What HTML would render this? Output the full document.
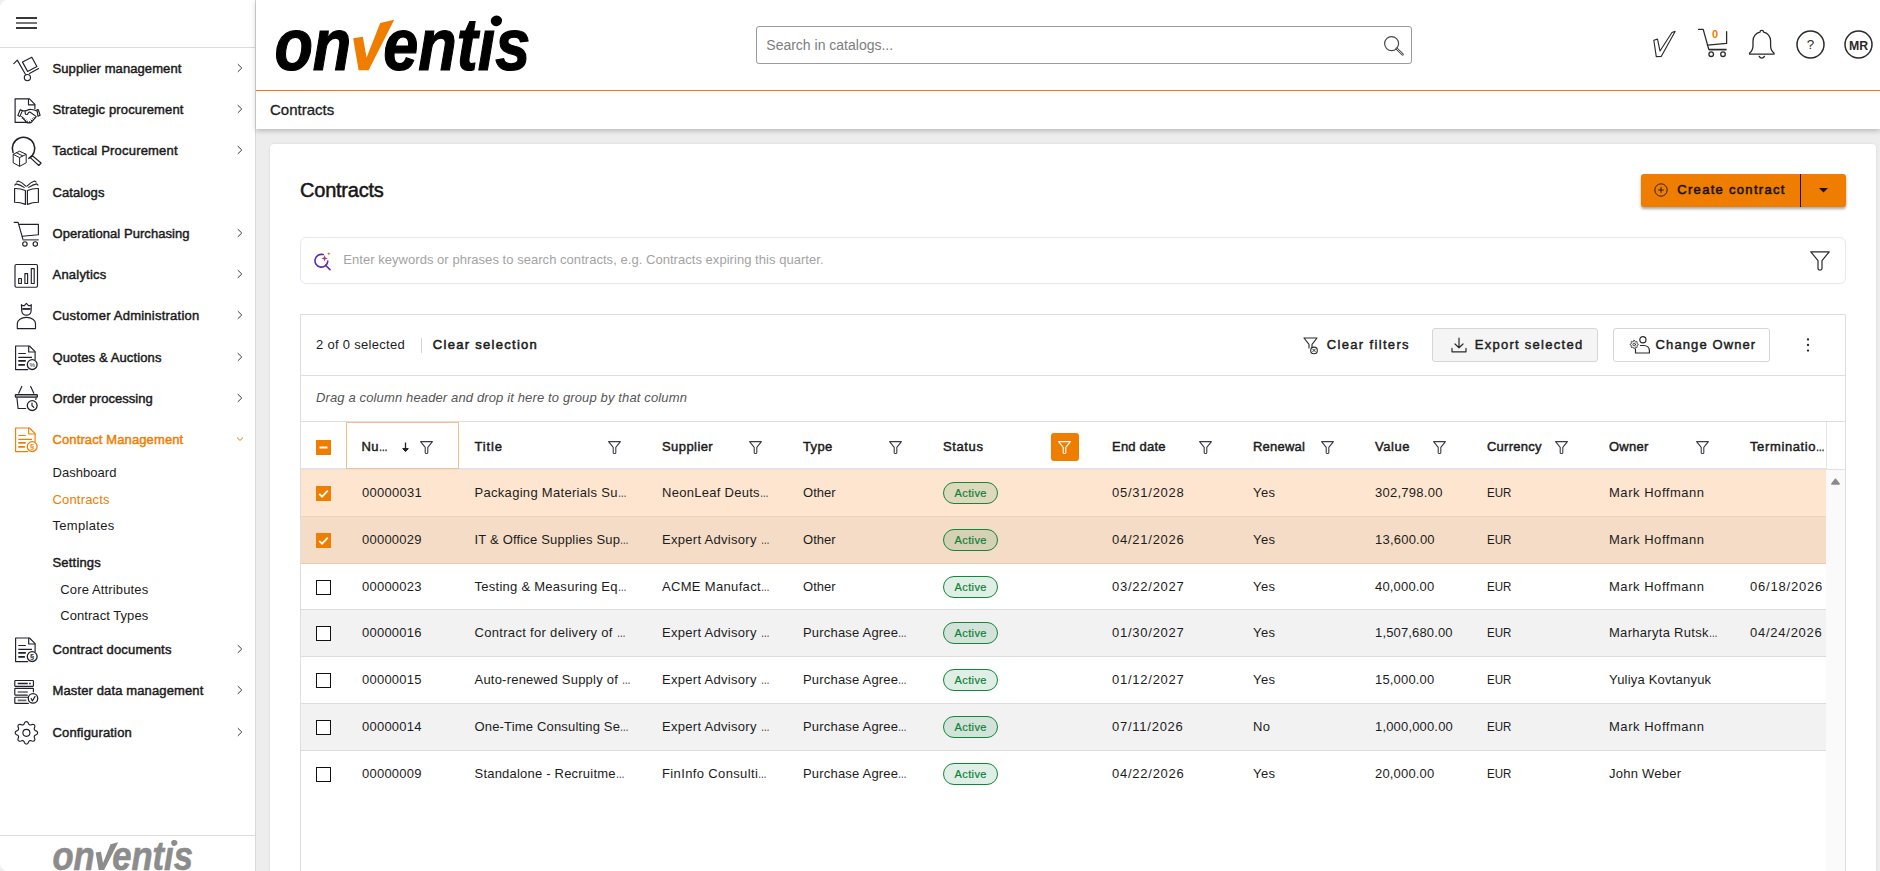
<!DOCTYPE html>
<html>
<head>
<meta charset="utf-8">
<title>Contracts</title>
<style>
*{box-sizing:border-box;margin:0;padding:0}
html,body{width:1880px;height:871px;overflow:hidden}
body{font-family:"Liberation Sans",sans-serif;font-size:13px;color:#1c1c1c;background:#ededed;position:relative}
.abs{position:absolute}
svg{display:block;overflow:visible}
.el{display:inline-block;width:8.6px;transform:scaleX(.66);transform-origin:0 50%;letter-spacing:0}
/* ---------- sidebar ---------- */
#side{position:absolute;left:0;top:0;width:256px;height:871px;background:#fff;border-right:1px solid #d9d9d9;border-radius:8px 0 0 8px}
#side .top{position:absolute;left:0;top:0;width:255px;height:48px;border-bottom:1px solid #dcdcdc}
.mi{position:absolute;left:0;width:255px;height:40px;line-height:40px}
.mi .lbl{position:absolute;left:52.5px;top:1px;white-space:nowrap;font-size:13px;color:#1b1b1b;-webkit-text-stroke:0.45px #1b1b1b;letter-spacing:0px}
.mi .ic{position:absolute;left:12px;top:6px;width:28px;height:28px}
.mi .chev{position:absolute;left:236px;top:15px;width:8px;height:10px}
.mi.act .lbl{color:#ef7d00;-webkit-text-stroke:0.45px #ef7d00}
.si{position:absolute;left:52.5px;height:20px;line-height:20px;font-size:13px;color:#1b1b1b;white-space:nowrap;letter-spacing:0.1px}
.si.b{-webkit-text-stroke:0.45px #1b1b1b}
.si.o{color:#ef7d00}
#side .foot{position:absolute;left:0;top:835px;width:255px;height:36px;border-top:1px solid #dcdcdc;overflow:hidden}
/* ---------- header ---------- */
#hdr{position:absolute;left:256px;top:0;width:1624px;height:129px;background:#fff;box-shadow:0 2px 5px rgba(0,0,0,.22)}
#hdr .line{position:absolute;left:0;top:90px;width:1624px;height:1px;background:#ef7d00}
#hdr .crumb{position:absolute;left:14px;top:100px;height:20px;line-height:20px;font-size:15px;color:#1c1c1c;-webkit-text-stroke:0.3px #1c1c1c}
#srch{position:absolute;left:500px;top:26px;width:656px;height:38px;border:1px solid #9b9b9b;border-radius:3px;background:#fff}
#srch span{position:absolute;left:9.300px;top:8px;line-height:20px;font-size:14px;color:#7d7d7d}
/* ---------- card ---------- */
#card{position:absolute;left:270px;top:144px;width:1606px;height:740px;background:#fff;border-radius:4px;box-shadow:0 0 3px rgba(0,0,0,.10)}
#card h1{position:absolute;left:30px;top:33px;line-height:26px;font-size:20px;font-weight:normal;color:#161616;-webkit-text-stroke:0.5px #161616;white-space:nowrap;letter-spacing:-0.22px}
#create{position:absolute;left:1371px;top:30px;width:205px;height:33px;background:#ef7d00;border-radius:3px;box-shadow:0 2px 3px rgba(0,0,0,.35)}
#create .t{position:absolute;left:36.300px;top:6px;line-height:20px;font-size:13px;color:#1a1208;-webkit-text-stroke:0.55px #1a1208;letter-spacing:1.3px;white-space:nowrap}
#create .dv{position:absolute;left:159px;top:0;width:1px;height:33px;background:#1a1208}
#ais{position:absolute;left:30px;top:93px;width:1546px;height:47px;border:1px solid #e6e6f4;border-radius:6px;background:#fff}
#ais .ph{position:absolute;left:42.300px;top:12px;line-height:20px;font-size:13px;color:#a3a3a3;white-space:nowrap;letter-spacing:0.04px}
/* ---------- grid ---------- */
#grid{position:absolute;left:30px;top:170px;width:1546px;height:600px;border:1px solid #dedede;border-bottom:none;background:#fff}
#tb{position:absolute;left:0;top:0;width:1544px;height:61px;border-bottom:1px solid #dedede}
#tb .sel{position:absolute;left:15px;top:20px;line-height:20px;white-space:nowrap;letter-spacing:0.3px;color:#1c1c1c}
#tb .sep{position:absolute;left:119.5px;top:23px;width:1px;height:15px;background:#d4d4d4}
.bt{position:absolute;line-height:20px;white-space:nowrap;font-size:13px;color:#1c1c1c;-webkit-text-stroke:0.45px #1c1c1c;letter-spacing:1.1px}
.bt.bold{font-weight:bold;-webkit-text-stroke:0}
.btn{position:absolute;top:13px;height:34px;border:1px solid #d6d6d6;border-radius:3px}
#gp{position:absolute;left:0;top:61px;width:1544px;height:46px;border-bottom:1px solid #dedede}
#gp span{position:absolute;left:15px;top:12px;line-height:20px;font-style:italic;color:#555;white-space:nowrap;letter-spacing:0.135px}
#gh{position:absolute;left:0;top:107px;width:1544px;height:48px;border-bottom:2px solid #e3e3e3;background:#fff}
.hc{position:absolute;top:0;height:45px}
.hc .t{position:absolute;left:15.5px;top:15px;line-height:20px;font-size:13px;color:#1b1b1b;-webkit-text-stroke:0.45px #1b1b1b;white-space:nowrap;letter-spacing:0.3px}
.hc .f{position:absolute;top:19px;width:13px;height:13px}
.row{position:absolute;left:0;width:1525px;height:46.83px;border-bottom:1px solid #dcdcdc;background:#fff}
.row.last{border-bottom:none}
.row.alt{background:#f2f2f2}
.row.s1{background:#fde5d0;border-bottom-color:#ecd3be}
.row.s2{background:#f4dcc6;border-bottom-color:#e6cdb8}
.c{position:absolute;top:13px;line-height:20px;white-space:nowrap;letter-spacing:0.3px;color:#1c1c1c}
.cb{position:absolute;left:15px;top:16px;width:15px;height:15px;border:1px solid #111;border-radius:0;background:#fff}
.cb.on{border:none;background:#ef7d00}
.bdg{position:absolute;left:642px;top:12px;width:55px;height:22px;border:1px solid #11873a;border-radius:11px;background:rgba(17,135,58,.13);color:#0d8236;-webkit-text-stroke:0.2px #0d8236;font-size:11px;line-height:20px;text-align:center;letter-spacing:0.38px;text-indent:0.4px}
</style>
</head>
<body>
<div class="abs" style="left:0;top:0;width:12px;height:871px;background:#efefef"></div>
<div id="side">
<div class="top"><div class="abs" style="left:16px;top:17px;width:21px;height:2px;background:#383838"></div><div class="abs" style="left:16px;top:22px;width:21px;height:2px;background:#757575"></div><div class="abs" style="left:16px;top:27px;width:21px;height:2px;background:#383838"></div></div>
<div class="mi" style="top:48px"><svg class="ic" viewBox="0 0 28 28"><path d="M1.8 9.6l3.5-3.5 8.100 14.200" stroke="#20202a" stroke-width="1.15" fill="none" stroke-linejoin="round" stroke-linecap="round" /><circle cx="15.400" cy="23.600" r="3.100" stroke="#20202a" stroke-width="1.15" fill="none" stroke-linejoin="round" stroke-linecap="round"/><path d="M17.500 19.500l9.100-5" stroke="#20202a" stroke-width="1.15" fill="none" stroke-linejoin="round" stroke-linecap="round" /><path d="M10.500 8.100l9.300-4.900 5.100 9.300-9.300 4.900z" stroke="#20202a" stroke-width="1.15" fill="none" stroke-linejoin="round" stroke-linecap="round" /></svg><div class="lbl" style="letter-spacing:0.094px">Supplier management</div><svg class="chev" viewBox="0 0 8 10"><path d="M1.800 1.200l4 3.800-4 3.800" stroke="#3a3a52" stroke-width="1" fill="none"/></svg></div>
<div class="mi" style="top:89px"><svg class="ic" viewBox="0 0 28 28"><g transform="translate(0 .8)"><path d="M22.900 13V8.600l-5.400-5.600H3.100v23.600h11.500" stroke="#20202a" stroke-width="1.15" fill="none" stroke-linejoin="round" stroke-linecap="round" /><path d="M16.500 3.400v5.600h6.200" stroke="#20202a" stroke-width="1.15" fill="none" stroke-linejoin="round" stroke-linecap="round" /><path d="M6 13.800l2.300-.3 2.600 1.200 4-1.600 4 .200 4.200 1.800 2.400-.6 1.500 5.500-3 .8-5.400 5.200-3.300 .600-7-6-2 .3z" fill="#fff" stroke="none"/><path d="M8.200 13.900l2.100.9-2.300 5.800-2.100-1z" stroke="#20202a" stroke-width="1.15" fill="none" stroke-linejoin="round" stroke-linecap="round" /><path d="M24.900 14.100l1.300-.400 1.900 5.800-2.100 1z" stroke="#20202a" stroke-width="1.15" fill="none" stroke-linejoin="round" stroke-linecap="round" /><path d="M10.300 14.800c2.500.6 4.500.2 5.500-.600s5.500-.9 9.100.9" stroke="#20202a" stroke-width="1.15" fill="none" stroke-linejoin="round" stroke-linecap="round" /><path d="M13.100 15.800l.3 2.700 2 .2 1.300-2.300 1.200-.2 6.200 4.400" stroke="#20202a" stroke-width="1.15" fill="none" stroke-linejoin="round" stroke-linecap="round" /><path d="M9.600 20.700l5 5.900c1.400.6 3.200.6 4.700 0l4.700-5.500" stroke="#20202a" stroke-width="1.15" fill="none" stroke-linejoin="round" stroke-linecap="round" stroke-width="1.200"/><path d="M11.200 21.500l-1 1.400M12.700 22.700l-1.100 1.500M14.200 23.900l-1.100 1.500M15.700 25l-1 1.400M17.300 25.200l1.100 1.300M18.800 23.900l1.200 1.400M20.300 22.600l1.200 1.400M21.700 21.300l1.200 1.400" stroke="#20202a" stroke-width="1" fill="none"/></g></svg><div class="lbl" style="letter-spacing:0.15px">Strategic procurement</div><svg class="chev" viewBox="0 0 8 10"><path d="M1.800 1.200l4 3.800-4 3.800" stroke="#3a3a52" stroke-width="1" fill="none"/></svg></div>
<div class="mi" style="top:130px"><svg class="ic" viewBox="0 0 28 28"><path d="M1.040 16.500A11.200 11.200 0 1 1 16.760 22.390" stroke="#20202a" stroke-width="1.500" fill="none" stroke-linecap="round"/><path d="M18.300 21.600l2.100-1.800 8.700 7.200-2.300 2.500z" stroke="#20202a" stroke-width="1.15" fill="none" stroke-linejoin="round" stroke-linecap="round" stroke-width="1.400"/><path d="M7.600 15.200l6.600 3.100v8.500l-6.600 3.500-6.400-3.500v-8.500z" fill="#fff" stroke="#20202a" stroke-width="1" stroke-linejoin="round"/><path d="M1.200 18.300l6.400 3.300 6.600-3.300M7.600 21.600v8.700M4.300 16.700l6.600 3.300" stroke="#20202a" stroke-width="1" fill="none"/></svg><div class="lbl" style="letter-spacing:0.195px">Tactical Procurement</div><svg class="chev" viewBox="0 0 8 10"><path d="M1.800 1.200l4 3.800-4 3.800" stroke="#3a3a52" stroke-width="1" fill="none"/></svg></div>
<div class="mi" style="top:172px"><svg class="ic" viewBox="0 0 28 28"><path d="M2.600 10.500q5.600-.2 10.800 2v13.900q-5.200-2.200-10.800-2.100z" stroke="#20202a" stroke-width="1.15" fill="none" stroke-linejoin="round" stroke-linecap="round" /><path d="M26.400 10.500q-5.600-.2-11 2v13.900q5.400-2.200 11-2.100z" stroke="#20202a" stroke-width="1.15" fill="none" stroke-linejoin="round" stroke-linecap="round" /><path d="M13.800 8.200Q10 4.200 6.300 3L4.700 3.900M12.100 9.400Q8 6.500 4 5.900L2.800 7.200M15 8.200Q18.800 4.200 22.500 3l1.600.9M16.700 9.400Q20.800 6.500 24.800 5.900L26 7.200" stroke="#20202a" stroke-width="1.15" fill="none" stroke-linejoin="round" stroke-linecap="round" /></svg><div class="lbl" style="letter-spacing:0.084px">Catalogs</div></div>
<div class="mi" style="top:213px"><svg class="ic" viewBox="0 0 28 28"><path d="M2.200 3.400h3.900l5 17.400" stroke="#20202a" stroke-width="1.15" fill="none" stroke-linejoin="round" stroke-linecap="round" /><path d="M7.400 5.400h19v10.400l-16.100 1.500" stroke="#20202a" stroke-width="1.15" fill="none" stroke-linejoin="round" stroke-linecap="round" /><path d="M11.100 20.800h15.700" stroke="#777" stroke-width="1.700" fill="none"/><circle cx="12.900" cy="24.900" r="2.200" stroke="#20202a" stroke-width="1.15" fill="none" stroke-linejoin="round" stroke-linecap="round"/><circle cx="23.300" cy="24.900" r="2.200" stroke="#20202a" stroke-width="1.15" fill="none" stroke-linejoin="round" stroke-linecap="round"/></svg><div class="lbl" style="letter-spacing:0.054px">Operational Purchasing</div><svg class="chev" viewBox="0 0 8 10"><path d="M1.800 1.200l4 3.800-4 3.800" stroke="#3a3a52" stroke-width="1" fill="none"/></svg></div>
<div class="mi" style="top:254px"><svg class="ic" viewBox="0 0 28 28"><rect x="3" y="4.500" width="22.500" height="22.700" rx="1.400" stroke="#20202a" stroke-width="1.15" fill="none" stroke-linejoin="round" stroke-linecap="round"/><rect x="6.700" y="18.500" width="2.700" height="5" stroke="#20202a" stroke-width="1.15" fill="none" stroke-linejoin="round" stroke-linecap="round"/><rect x="12.900" y="13.600" width="2.700" height="9.900" stroke="#20202a" stroke-width="1.15" fill="none" stroke-linejoin="round" stroke-linecap="round"/><rect x="19.300" y="8.600" width="2.900" height="14.900" stroke="#20202a" stroke-width="1.15" fill="none" stroke-linejoin="round" stroke-linecap="round"/></svg><div class="lbl" style="letter-spacing:0.221px">Analytics</div><svg class="chev" viewBox="0 0 8 10"><path d="M1.800 1.200l4 3.800-4 3.800" stroke="#3a3a52" stroke-width="1" fill="none"/></svg></div>
<div class="mi" style="top:295px"><svg class="ic" viewBox="0 0 28 28"><path d="M9.400 3.600l.9 1h2l2.100-2.200 2.100 2.200h2l.8-1-.2 6.600c-.3 2.400-2.200 3.900-4.700 3.900s-4.300-1.500-4.600-3.900z" stroke="#20202a" stroke-width="1.15" fill="none" stroke-linejoin="round" stroke-linecap="round" /><path d="M10.300 7.950h8.200" stroke="#20202a" stroke-width="1.800" fill="none"/><path d="M5.300 27.600v-5c0-3.400 3.900-6.200 9.100-6.200s9.100 2.800 9.100 6.200v5z" stroke="#20202a" stroke-width="1.15" fill="none" stroke-linejoin="round" stroke-linecap="round" /></svg><div class="lbl" style="letter-spacing:0.231px">Customer Administration</div><svg class="chev" viewBox="0 0 8 10"><path d="M1.800 1.200l4 3.800-4 3.800" stroke="#3a3a52" stroke-width="1" fill="none"/></svg></div>
<div class="mi" style="top:337px"><svg class="ic" viewBox="0 0 28 28"><path d="M23.100 16.700V8.600l-5.600-5.600H3.600v23.600h12.200" stroke="#20202a" stroke-width="1.15" fill="none" stroke-linejoin="round" stroke-linecap="round"/><path d="M16.700 3.400v5.600h6.200" stroke="#20202a" stroke-width="1.15" fill="none" stroke-linejoin="round" stroke-linecap="round"/><path d="M6.300 10.500h7.500M6.300 14.400h13.700" stroke="#20202a" stroke-width="1.200" fill="none"/><path d="M6.300 17.900h7.500M6.300 21.800h6.600" stroke="#20202a" stroke-width="1.700" fill="none"/><circle cx="20.200" cy="21.600" r="4.900" fill="#fff" stroke="#20202a" stroke-width="1.300"/><text x="20.200" y="23.800" font-size="6.200" font-weight="normal" text-anchor="middle" fill="#20202a" font-family="Liberation Sans">%</text></svg><div class="lbl" style="letter-spacing:0.122px">Quotes &amp; Auctions</div><svg class="chev" viewBox="0 0 8 10"><path d="M1.800 1.200l4 3.800-4 3.800" stroke="#3a3a52" stroke-width="1" fill="none"/></svg></div>
<div class="mi" style="top:378px"><svg class="ic" viewBox="0 0 28 28"><path d="M6.700 9.200l3.100-6.800M21.800 9.200l-3.100-6.800" stroke="#20202a" stroke-width="1.15" fill="none" stroke-linejoin="round" stroke-linecap="round" /><rect x="3.400" y="10.700" width="21.900" height="2.400" fill="#c4c4c4" stroke="#20202a" stroke-width="1.300" rx=".4"/><path d="M4.900 13.800l1.200 10.700h7.500M24.100 13.800l-.3 1.600" stroke="#20202a" stroke-width="1.15" fill="none" stroke-linejoin="round" stroke-linecap="round" /><circle cx="20.200" cy="21.600" r="4.900" fill="#fff" stroke="#20202a" stroke-width="1.300"/><path d="M20 19.100v2.700l1.800 1.500" stroke="#20202a" stroke-width="1.15" fill="none" stroke-linejoin="round" stroke-linecap="round" /></svg><div class="lbl" style="letter-spacing:0.039px">Order processing</div><svg class="chev" viewBox="0 0 8 10"><path d="M1.800 1.200l4 3.800-4 3.800" stroke="#3a3a52" stroke-width="1" fill="none"/></svg></div>
<div class="mi act" style="top:419px"><svg class="ic" viewBox="0 0 28 28"><path d="M23.100 16.700V8.600l-5.600-5.600H3.600v23.600h12.200" stroke="#ef7d00" stroke-width="1.15" fill="none" stroke-linejoin="round" stroke-linecap="round"/><path d="M16.700 3.400v5.600h6.200" stroke="#ef7d00" stroke-width="1.15" fill="none" stroke-linejoin="round" stroke-linecap="round"/><path d="M6.300 10.500h7.500M6.300 14.400h13.700" stroke="#ef7d00" stroke-width="1.200" fill="none"/><path d="M6.300 17.900h7.500M6.300 21.800h6.600" stroke="#ef7d00" stroke-width="1.700" fill="none"/><circle cx="20.200" cy="21.600" r="4.900" fill="#fff" stroke="#ef7d00" stroke-width="1.300"/><text x="20.200" y="24.300" font-size="7.500" font-weight="bold" text-anchor="middle" fill="#ef7d00" font-family="Liberation Sans">§</text></svg><div class="lbl" style="letter-spacing:0.115px">Contract Management</div><svg class="chev" viewBox="0 0 8 10"><path d="M1 3.600l3 2.800 3-2.800" stroke="#ef7d00" stroke-width="1" fill="none"/></svg></div>
<div class="mi" style="top:629px"><svg class="ic" viewBox="0 0 28 28"><path d="M23.100 16.700V8.600l-5.600-5.600H3.600v23.600h12.200" stroke="#20202a" stroke-width="1.15" fill="none" stroke-linejoin="round" stroke-linecap="round"/><path d="M16.700 3.400v5.600h6.200" stroke="#20202a" stroke-width="1.15" fill="none" stroke-linejoin="round" stroke-linecap="round"/><path d="M6.300 10.500h7.500M6.300 14.400h13.700" stroke="#20202a" stroke-width="1.200" fill="none"/><path d="M6.300 17.900h7.500M6.300 21.800h6.600" stroke="#20202a" stroke-width="1.700" fill="none"/><circle cx="20.200" cy="21.600" r="4.900" fill="#fff" stroke="#20202a" stroke-width="1.300"/><text x="20.200" y="24.300" font-size="7.500" font-weight="bold" text-anchor="middle" fill="#20202a" font-family="Liberation Sans">§</text></svg><div class="lbl" style="letter-spacing:0.15px">Contract documents</div><svg class="chev" viewBox="0 0 8 10"><path d="M1.800 1.200l4 3.800-4 3.800" stroke="#3a3a52" stroke-width="1" fill="none"/></svg></div>
<div class="mi" style="top:670px"><svg class="ic" viewBox="0 0 28 28"><rect x="2.800" y="4.500" width="18.600" height="5.800" rx=".5" stroke="#20202a" stroke-width="1.15" fill="none" stroke-linejoin="round" stroke-linecap="round"/><path d="M15.400 19.100H3.300q-.5 0-.5-.5v-5.800q0-.5.500-.5h17.600q.5 0 .5.500v3" stroke="#20202a" stroke-width="1.15" fill="none" stroke-linejoin="round" stroke-linecap="round" /><path d="M15.800 21.200H3.300q-.5 0-.5.500v5.200q0 .5.500.5h13" stroke="#20202a" stroke-width="1.15" fill="none" stroke-linejoin="round" stroke-linecap="round" /><path d="M5.700 7.500h10.100M17.100 7.500h1.600" stroke="#20202a" stroke-width="1.300" fill="none"/><path d="M5.700 16h10.100M5.700 24.300h8.700" stroke="#666" stroke-width="1.700" fill="none"/><circle cx="21" cy="22.400" r="4.700" fill="#fff" stroke="#20202a" stroke-width="1.300"/><path d="M19.100 22.400l1.300 2.500 2.700-4.500" stroke="#20202a" stroke-width="1.15" fill="none" stroke-linejoin="round" stroke-linecap="round" /></svg><div class="lbl" style="letter-spacing:0.127px">Master data management</div><svg class="chev" viewBox="0 0 8 10"><path d="M1.800 1.200l4 3.800-4 3.800" stroke="#3a3a52" stroke-width="1" fill="none"/></svg></div>
<div class="mi" style="top:712px"><svg class="ic" viewBox="0 0 28 28"><path d="M14.40 3.60L15.12 3.75L15.80 4.19L16.33 5.09L16.76 6.01L17.20 6.54L17.69 6.85L18.26 6.98L18.95 6.92L19.90 6.57L20.91 6.31L21.70 6.47L22.32 6.88L22.73 7.50L22.89 8.29L22.63 9.30L22.28 10.25L22.22 10.94L22.35 11.51L22.66 12.00L23.19 12.44L24.11 12.87L25.01 13.40L25.45 14.08L25.60 14.80L25.45 15.52L25.01 16.20L24.11 16.73L23.19 17.16L22.66 17.60L22.35 18.09L22.22 18.66L22.28 19.35L22.63 20.30L22.89 21.31L22.73 22.10L22.32 22.72L21.70 23.13L20.91 23.29L19.90 23.03L18.95 22.68L18.26 22.62L17.69 22.75L17.20 23.06L16.76 23.59L16.33 24.51L15.80 25.41L15.12 25.85L14.40 26.00L13.68 25.85L13.00 25.41L12.47 24.51L12.04 23.59L11.60 23.06L11.11 22.75L10.54 22.62L9.85 22.68L8.90 23.03L7.89 23.29L7.10 23.13L6.48 22.72L6.07 22.10L5.91 21.31L6.17 20.30L6.52 19.35L6.58 18.66L6.45 18.09L6.14 17.60L5.61 17.16L4.69 16.73L3.79 16.20L3.35 15.52L3.20 14.80L3.35 14.08L3.79 13.40L4.69 12.87L5.61 12.44L6.14 12.00L6.45 11.51L6.58 10.94L6.52 10.25L6.17 9.30L5.91 8.29L6.07 7.50L6.48 6.88L7.10 6.47L7.89 6.31L8.90 6.57L9.85 6.92L10.54 6.98L11.11 6.85L11.60 6.54L12.04 6.01L12.47 5.09L13.00 4.19L13.68 3.75z" stroke="#20202a" stroke-width="1.15" fill="none" stroke-linejoin="round" stroke-linecap="round" /><circle cx="14.400" cy="14.800" r="3.500" stroke="#20202a" stroke-width="1.15" fill="none" stroke-linejoin="round" stroke-linecap="round"/></svg><div class="lbl" style="letter-spacing:0.164px">Configuration</div><svg class="chev" viewBox="0 0 8 10"><path d="M1.800 1.200l4 3.800-4 3.800" stroke="#3a3a52" stroke-width="1" fill="none"/></svg></div>
<div class="si " style="left:52.5px;top:463px;letter-spacing:0.036px">Dashboard</div>
<div class="si o" style="left:52.5px;top:490px;letter-spacing:0.17px">Contracts</div>
<div class="si " style="left:52.5px;top:516px;letter-spacing:0.319px">Templates</div>
<div class="si b" style="left:52.5px;top:553px;letter-spacing:0.188px">Settings</div>
<div class="si " style="left:60.3px;top:580px;letter-spacing:0.136px">Core Attributes</div>
<div class="si " style="left:60.3px;top:606px;letter-spacing:0.054px">Contract Types</div>
<div class="foot"><svg class="abs" style="left:50px;top:1px" width="146.034" height="37.332" viewBox="270 10 266 68"><g font-family="Liberation Sans" font-weight="bold" font-style="italic" font-size="73.500" fill="#8c8c8c" stroke="#8c8c8c" stroke-width="1.2"><text transform="translate(274.400 70.300) scale(0.857 1)">on</text><text transform="translate(383.300 70.300) scale(0.857 1)">entis</text></g><rect x="484" y="12" width="18" height="13.500" fill="#fff"/><ellipse cx="496.400" cy="20.800" rx="5.700" ry="5.300" fill="#8c8c8c" transform="rotate(-15 496.400 20.800)"/><path d="M353.2 38.300L362.800 36.700L366.600 57.500L380.200 23L394.200 19.700L368.600 70.300L358.600 70.300Z" fill="#8c8c8c"/></svg></div>
</div>
<div id="hdr">
<div class="line"></div>
<div class="crumb">Contracts</div>
<div id="srch"><span>Search in catalogs...</span></div>
<svg class="abs" style="left:14px;top:10px" width="266" height="68" viewBox="270 10 266 68"><g font-family="Liberation Sans" font-weight="bold" font-style="italic" font-size="73.500" fill="#000" stroke="#000" stroke-width="1.2"><text transform="translate(274.400 70.300) scale(0.857 1)">on</text><text transform="translate(383.300 70.300) scale(0.857 1)">entis</text></g><rect x="484" y="12" width="18" height="13.500" fill="#fff"/><ellipse cx="496.400" cy="20.800" rx="5.700" ry="5.300" fill="#000" transform="rotate(-15 496.400 20.800)"/><path d="M353.2 38.300L362.800 36.700L366.600 57.500L380.200 23L394.200 19.700L368.600 70.300L358.600 70.300Z" fill="#ef7d00"/></svg>
<svg class="abs" style="left:1126.800px;top:35px" width="22" height="22" viewBox="0 0 22 22"><circle cx="8.600" cy="8.600" r="7" stroke="#484848" stroke-width="1.200" fill="none"/><path d="M13.600 13.600l6 5.800" stroke="#484848" stroke-width="2.400" stroke-linecap="round"/><path d="M14 14l5.500 5.300" stroke="#fff" stroke-width=".8" stroke-linecap="round"/></svg>
<svg class="abs" style="left:1392px;top:26px" width="30" height="34" viewBox="0 0 30 34"><path transform="translate(2.300 2.600) scale(0.880)" d="M4 13.200l4.200-1.200 2.800 13.400L24.600 4.400l3.600-1.200L12.400 31.600l-5.600.2z" stroke="#2a2a2a" stroke-width="1.3" fill="none" stroke-linejoin="round" stroke-linecap="round"/></svg>
<svg class="abs" style="left:1441px;top:26px" width="34" height="34" viewBox="0 0 34 34"><path d="M1.600 3.400h4.600l5.600 20" stroke="#2a2a2a" stroke-width="1.3" fill="none" stroke-linejoin="round" stroke-linecap="round"/><path d="M29.600 5.600v11.800l-19.200 1.800" stroke="#2a2a2a" stroke-width="1.3" fill="none" stroke-linejoin="round" stroke-linecap="round"/><path d="M11.800 23.600h17.800" stroke="#2a2a2a" stroke-width="1.700" fill="none"/><circle cx="14.200" cy="28.200" r="2.300" stroke="#2a2a2a" stroke-width="1.3" fill="none" stroke-linejoin="round" stroke-linecap="round"/><circle cx="26" cy="28.200" r="2.300" stroke="#2a2a2a" stroke-width="1.3" fill="none" stroke-linejoin="round" stroke-linecap="round"/><text x="18" y="12.300" font-family="Liberation Sans" font-size="11" font-weight="bold" fill="#ef7d00" text-anchor="middle">0</text></svg>
<svg class="abs" style="left:1492px;top:28px" width="28" height="32" viewBox="0 0 28 32"><path d="M1.600 26.200h24.400v-1.200c-2.600-2-3.400-4.200-3.400-7.600v-4.400c0-4.600-3-8.200-7-8.800a1.800 1.800 0 1 0-3.600 0c-4 .600-7 4.200-7 8.800v4.400c0 3.400-.8 5.600-3.400 7.600z" stroke="#2a2a2a" stroke-width="1.3" fill="none" stroke-linejoin="round" stroke-linecap="round"/><path d="M11.200 28.400c.6 1.200 1.600 1.800 2.600 1.800s2-.6 2.600-1.800" stroke="#2a2a2a" stroke-width="1.3" fill="none" stroke-linejoin="round" stroke-linecap="round"/></svg>
<svg class="abs" style="left:1540px;top:30px" width="29" height="29" viewBox="0 0 29 29"><circle cx="14.500" cy="14.500" r="13.500" stroke="#2a2a2a" stroke-width="1.5" fill="none" stroke-linejoin="round" stroke-linecap="round"/><text x="14.500" y="19.300" font-family="Liberation Sans" font-size="13.500" fill="#2a2a2a" text-anchor="middle">?</text></svg>
<svg class="abs" style="left:1588px;top:30px" width="29" height="29" viewBox="0 0 29 29"><circle cx="14.500" cy="14.500" r="13.500" stroke="#2a2a2a" stroke-width="1.5" fill="none" stroke-linejoin="round" stroke-linecap="round"/><text x="14.600" y="19.900" font-family="Liberation Sans" font-size="12.300" font-weight="bold" fill="#2a2a2a" text-anchor="middle">MR</text></svg>
</div>
<div id="card">
<h1>Contracts</h1>
<div id="create"><svg class="abs" style="left:13px;top:8.500px" width="14" height="14" viewBox="0 0 14 14"><circle cx="7" cy="7" r="6.200" stroke="#1a1208" stroke-width=".9" fill="none"/><path d="M7 4.200v5.600M4.200 7h5.600" stroke="#1a1208" stroke-width=".9" fill="none"/></svg><div class="t">Create contract</div><div class="dv"></div><svg class="abs" style="left:178px;top:13.500px" width="9" height="5" viewBox="0 0 9 5"><path d="M0 0h9L4.500 4.600z" fill="#1a1208"/></svg></div>
<div id="ais"><svg class="abs" style="left:13px;top:14px" width="18" height="19" viewBox="0 0 18 19"><path d="M9.200 2.600A6.400 6.400 0 1 0 13.800 9" stroke="#5b2fa8" stroke-width="1.600" fill="none" stroke-linecap="round"/><path d="M11.600 13.200l4.400 4.400" stroke="#5b2fa8" stroke-width="1.600" stroke-linecap="round"/><path d="M10.600 3.200l.9 2.300 2.300.9-2.300.9-.9 2.300-.9-2.300-2.300-.9 2.300-.9z" fill="#c2337a"/><path d="M14.800 0l.5 1.300 1.300.5-1.300.5-.5 1.300-.5-1.300-1.300-.5 1.300-.5z" fill="#e8622a"/></svg><div class="ph">Enter keywords or phrases to search contracts, e.g. Contracts expiring this quarter.</div><svg class="abs" style="left:1509px;top:12.700px" width="20" height="20" viewBox="0 0 20 20"><path d="M0.800 0.800h18.400L12 9.600v8c0 1.200-.9 1.500-2 1.500s-2-.3-2-1.500v-8z" stroke="#2a2a2a" stroke-width="1.200" fill="none" stroke-linejoin="round"/></svg></div>
<div id="grid">
<div id="tb"><div class="sel">2 of 0 selected</div><div class="sep"></div>
<div class="bt" id="clrsel" style="left:131.800px;top:20px;letter-spacing:1.29px;-webkit-text-stroke:0.55px #1c1c1c">Clear selection</div>
<svg class="abs" style="left:1002px;top:22px" width="18" height="18" viewBox="0 0 18 18"><path d="M1 1h13l-5 6.400v3M6 11V7.400L1 1" stroke="#2a2a2a" stroke-width="1.1" fill="none" stroke-linejoin="round" stroke-linecap="round"/><circle cx="11" cy="13.400" r="3.300" stroke="#2a2a2a" stroke-width="1.1" fill="none" stroke-linejoin="round" stroke-linecap="round"/><path d="M9.800 12.200l2.400 2.400M12.200 12.200l-2.400 2.400" stroke="#2a2a2a" stroke-width="1" fill="none" stroke-linejoin="round" stroke-linecap="round"/></svg>
<div class="bt" style="left:1025.700px;top:20px;letter-spacing:1.35px">Clear filters</div>
<div class="btn" style="left:1131px;width:166px;background:#f5f5f5"></div>
<svg class="abs" style="left:1150px;top:22px" width="16" height="16" viewBox="0 0 16 16"><path d="M8 1v9.600M4 7l4 3.800L12 7M1 11.400v3.400h14v-3.400" stroke="#2a2a2a" stroke-width="1.2" fill="none" stroke-linejoin="round" stroke-linecap="round"/></svg>
<div class="bt" style="left:1173.700px;top:20px;letter-spacing:1.28px">Export selected</div>
<div class="btn" style="left:1312px;width:157px;background:#fff"></div>
<svg class="abs" style="left:1328px;top:20px" width="22" height="20" viewBox="0 0 22 20"><circle cx="13.900" cy="4.700" r="3.100" stroke="#2a2a2a" stroke-width="1.2" fill="none" stroke-linejoin="round" stroke-linecap="round"/><path d="M6.500 13.800V18H20.400V15.200C20.400 12.600 18 10.500 15.200 10.500H11.400" stroke="#2a2a2a" stroke-width="1.2" fill="none" stroke-linejoin="round" stroke-linecap="round"/><path d="M5.20 5.45L5.59 5.57L5.88 6.07L6.09 6.58L6.33 6.77L6.64 6.81L7.14 6.59L7.70 6.45L8.06 6.64L8.25 7.00L8.11 7.56L7.89 8.06L7.93 8.37L8.12 8.61L8.63 8.82L9.13 9.11L9.25 9.50L9.13 9.89L8.63 10.18L8.12 10.39L7.93 10.63L7.89 10.94L8.11 11.44L8.25 12.00L8.06 12.36L7.70 12.55L7.14 12.41L6.64 12.19L6.33 12.23L6.09 12.42L5.88 12.93L5.59 13.43L5.20 13.55L4.81 13.43L4.52 12.93L4.31 12.42L4.07 12.23L3.76 12.19L3.26 12.41L2.70 12.55L2.34 12.36L2.15 12.00L2.29 11.44L2.51 10.94L2.47 10.63L2.28 10.39L1.77 10.18L1.27 9.89L1.15 9.50L1.27 9.11L1.77 8.82L2.28 8.61L2.47 8.37L2.51 8.06L2.29 7.56L2.15 7.00L2.34 6.64L2.70 6.45L3.26 6.59L3.76 6.81L4.07 6.77L4.31 6.58L4.52 6.07L4.81 5.57z" stroke="#2a2a2a" stroke-width=".9" fill="none" stroke-linejoin="round" stroke-linecap="round"/><circle cx="5.200" cy="9.500" r="1.300" stroke="#2a2a2a" stroke-width=".9" fill="none" stroke-linejoin="round" stroke-linecap="round"/></svg>
<div class="bt" style="left:1354.600px;top:20px;letter-spacing:1.1px">Change Owner</div>
<svg class="abs" style="left:1505px;top:22px" width="4" height="16" viewBox="0 0 4 16"><circle cx="2" cy="2.400" r="1.150" fill="#222"/><circle cx="2" cy="8" r="1.150" fill="#222"/><circle cx="2" cy="13.600" r="1.150" fill="#222"/></svg>
</div>
<div id="gp"><span>Drag a column header and drop it here to group by that column</span></div>
<div id="gh">
<div class="cb on" style="top:18px"><svg width="15" height="15" viewBox="0 0 15 15"><path d="M3.5 7.5h8" stroke="#fff" stroke-width="2" /></svg></div>
<div class="hc" style="left:45px;width:113px;border:1px solid #f3c089;height:47px;top:0"><div class="t" style="left:14.5px;top:14px;letter-spacing:0.291px">Nu<span class="el">…</span></div><svg class="abs" style="left:53.600px;top:19px" width="9" height="11" viewBox="0 0 9 11"><path d="M4.500 .5v8" stroke="#222" stroke-width="1.300" fill="none"/><path d="M1.700 6.600l2.800 3 2.800-3z" stroke="#222" stroke-width="1" fill="#222" stroke-linejoin="round"/></svg><svg class="f" style="top:18px;left:72.5px" viewBox="0 0 13 13"><path d="M0.600 0.600h11.800L7.800 6.400v5.300c0 .6-.5.800-1.300.800s-1.300-.2-1.300-.8V6.400z" fill="#fff" stroke="#3a3a4a" stroke-width="1.1" stroke-linejoin="round"/></svg></div>
<div class="hc" style="left:158px;width:187.5px"><div class="t" style="letter-spacing:0.88px">Title</div><svg class="f" style="left:149px" viewBox="0 0 13 13"><path d="M0.600 0.600h11.800L7.800 6.400v5.300c0 .6-.5.800-1.300.800s-1.300-.2-1.300-.8V6.400z" fill="#fff" stroke="#3a3a4a" stroke-width="1.1" stroke-linejoin="round"/></svg></div>
<div class="hc" style="left:345.5px;width:141px"><div class="t" style="letter-spacing:0.428px">Supplier</div><svg class="f" style="left:102.5px" viewBox="0 0 13 13"><path d="M0.600 0.600h11.800L7.800 6.400v5.300c0 .6-.5.800-1.300.800s-1.300-.2-1.300-.8V6.400z" fill="#fff" stroke="#3a3a4a" stroke-width="1.1" stroke-linejoin="round"/></svg></div>
<div class="hc" style="left:486.5px;width:140px"><div class="t" style="letter-spacing:0.371px">Type</div><svg class="f" style="left:101.5px" viewBox="0 0 13 13"><path d="M0.600 0.600h11.800L7.800 6.400v5.300c0 .6-.5.800-1.300.800s-1.300-.2-1.300-.8V6.400z" fill="#fff" stroke="#3a3a4a" stroke-width="1.1" stroke-linejoin="round"/></svg></div>
<div class="hc" style="left:626.5px;width:169px"><div class="t" style="letter-spacing:0.608px">Status</div><div class="abs" style="left:123px;top:10.5px;width:28px;height:28.5px;background:#ef7d00;border-radius:3px"></div><svg class="f" style="left:130.5px" viewBox="0 0 13 13"><path d="M0.600 0.600h11.800L7.800 6.400v5.300c0 .6-.5.800-1.300.800s-1.300-.2-1.300-.8V6.400z" fill="none" stroke="#fff" stroke-width="1.1" stroke-linejoin="round"/></svg></div>
<div class="hc" style="left:795.5px;width:141px"><div class="t" style="letter-spacing:0.208px">End date</div><svg class="f" style="left:102.5px" viewBox="0 0 13 13"><path d="M0.600 0.600h11.800L7.800 6.400v5.300c0 .6-.5.800-1.300.800s-1.300-.2-1.300-.8V6.400z" fill="#fff" stroke="#3a3a4a" stroke-width="1.1" stroke-linejoin="round"/></svg></div>
<div class="hc" style="left:936.5px;width:122px"><div class="t" style="letter-spacing:0.201px">Renewal</div><svg class="f" style="left:83.5px" viewBox="0 0 13 13"><path d="M0.600 0.600h11.800L7.800 6.400v5.300c0 .6-.5.800-1.300.800s-1.300-.2-1.300-.8V6.400z" fill="#fff" stroke="#3a3a4a" stroke-width="1.1" stroke-linejoin="round"/></svg></div>
<div class="hc" style="left:1058.5px;width:112px"><div class="t" style="letter-spacing:0.526px">Value</div><svg class="f" style="left:73.5px" viewBox="0 0 13 13"><path d="M0.600 0.600h11.800L7.800 6.400v5.300c0 .6-.5.800-1.300.800s-1.300-.2-1.300-.8V6.400z" fill="#fff" stroke="#3a3a4a" stroke-width="1.1" stroke-linejoin="round"/></svg></div>
<div class="hc" style="left:1170.5px;width:122px"><div class="t" style="letter-spacing:0.236px">Currency</div><svg class="f" style="left:83.5px" viewBox="0 0 13 13"><path d="M0.600 0.600h11.800L7.800 6.400v5.300c0 .6-.5.800-1.300.800s-1.300-.2-1.300-.8V6.400z" fill="#fff" stroke="#3a3a4a" stroke-width="1.1" stroke-linejoin="round"/></svg></div>
<div class="hc" style="left:1292.5px;width:141px"><div class="t" style="letter-spacing:0.251px">Owner</div><svg class="f" style="left:102.5px" viewBox="0 0 13 13"><path d="M0.600 0.600h11.800L7.800 6.400v5.300c0 .6-.5.800-1.300.800s-1.300-.2-1.300-.8V6.400z" fill="#fff" stroke="#3a3a4a" stroke-width="1.1" stroke-linejoin="round"/></svg></div>
<div class="hc" style="left:1433.5px;width:91.5px"><div class="t" style="letter-spacing:0.624px">Terminatio<span class="el">…</span></div></div>
</div>
<div class="row s1" style="top:155px"><div class="cb on"><svg width="15" height="15" viewBox="0 0 15 15"><path d="M3.2 7.8l2.9 2.9 5.7-6" stroke="#fff" stroke-width="1.8" fill="none"/></svg></div><div class="c" style="left:61px;letter-spacing:0.279px">00000031</div><div class="c" style="left:173.5px;letter-spacing:0.301px">Packaging Materials Su<span class="el">…</span></div><div class="c" style="left:361px;letter-spacing:0.282px">NeonLeaf Deuts<span class="el">…</span></div><div class="c" style="left:502px;letter-spacing:0.046px">Other</div><div class="bdg">Active</div><div class="c" style="left:811px;letter-spacing:0.747px">05/31/2028</div><div class="c" style="left:952px;letter-spacing:0.441px">Yes</div><div class="c" style="left:1074px;letter-spacing:0.258px">302,798.00</div><div class="c" style="left:1186px;letter-spacing:0;transform-origin:0 50%;transform:scaleX(0.889)">EUR</div><div class="c" style="left:1308px;letter-spacing:0.538px">Mark Hoffmann</div></div>
<div class="row s2" style="top:201.83px"><div class="cb on"><svg width="15" height="15" viewBox="0 0 15 15"><path d="M3.2 7.8l2.9 2.9 5.7-6" stroke="#fff" stroke-width="1.8" fill="none"/></svg></div><div class="c" style="left:61px;letter-spacing:0.23px">00000029</div><div class="c" style="left:173.5px;letter-spacing:0.185px">IT &amp; Office Supplies Sup<span class="el">…</span></div><div class="c" style="left:361px;letter-spacing:0.292px">Expert Advisory <span class="el">…</span></div><div class="c" style="left:502px;letter-spacing:0.046px">Other</div><div class="bdg">Active</div><div class="c" style="left:811px;letter-spacing:0.747px">04/21/2026</div><div class="c" style="left:952px;letter-spacing:0.441px">Yes</div><div class="c" style="left:1074px;letter-spacing:0.22px">13,600.00</div><div class="c" style="left:1186px;letter-spacing:0;transform-origin:0 50%;transform:scaleX(0.889)">EUR</div><div class="c" style="left:1308px;letter-spacing:0.538px">Mark Hoffmann</div></div>
<div class="row" style="top:248.66px"><div class="cb"></div><div class="c" style="left:61px;letter-spacing:0.23px">00000023</div><div class="c" style="left:173.5px;letter-spacing:0.269px">Testing &amp; Measuring Eq<span class="el">…</span></div><div class="c" style="left:361px;letter-spacing:0.327px">ACME Manufact<span class="el">…</span></div><div class="c" style="left:502px;letter-spacing:0.046px">Other</div><div class="bdg">Active</div><div class="c" style="left:811px;letter-spacing:0.747px">03/22/2027</div><div class="c" style="left:952px;letter-spacing:0.441px">Yes</div><div class="c" style="left:1074px;letter-spacing:0.17px">40,000.00</div><div class="c" style="left:1186px;letter-spacing:0;transform-origin:0 50%;transform:scaleX(0.889)">EUR</div><div class="c" style="left:1308px;letter-spacing:0.538px">Mark Hoffmann</div><div class="c" style="left:1449px;letter-spacing:0.791px">06/18/2026</div></div>
<div class="row alt" style="top:295.49px"><div class="cb"></div><div class="c" style="left:61px;letter-spacing:0.23px">00000016</div><div class="c" style="left:173.5px;letter-spacing:0.313px">Contract for delivery of <span class="el">…</span></div><div class="c" style="left:361px;letter-spacing:0.292px">Expert Advisory <span class="el">…</span></div><div class="c" style="left:502px;letter-spacing:0.192px">Purchase Agree<span class="el">…</span></div><div class="bdg">Active</div><div class="c" style="left:811px;letter-spacing:0.747px">01/30/2027</div><div class="c" style="left:952px;letter-spacing:0.441px">Yes</div><div class="c" style="left:1074px;letter-spacing:0.154px">1,507,680.00</div><div class="c" style="left:1186px;letter-spacing:0;transform-origin:0 50%;transform:scaleX(0.889)">EUR</div><div class="c" style="left:1308px;letter-spacing:0.295px">Marharyta Rutsk<span class="el">…</span></div><div class="c" style="left:1449px;letter-spacing:0.747px">04/24/2026</div></div>
<div class="row" style="top:342.32px"><div class="cb"></div><div class="c" style="left:61px;letter-spacing:0.23px">00000015</div><div class="c" style="left:173.5px;letter-spacing:0.214px">Auto-renewed Supply of <span class="el">…</span></div><div class="c" style="left:361px;letter-spacing:0.292px">Expert Advisory <span class="el">…</span></div><div class="c" style="left:502px;letter-spacing:0.192px">Purchase Agree<span class="el">…</span></div><div class="bdg">Active</div><div class="c" style="left:811px;letter-spacing:0.747px">01/12/2027</div><div class="c" style="left:952px;letter-spacing:0.441px">Yes</div><div class="c" style="left:1074px;letter-spacing:0.17px">15,000.00</div><div class="c" style="left:1186px;letter-spacing:0;transform-origin:0 50%;transform:scaleX(0.889)">EUR</div><div class="c" style="left:1308px;letter-spacing:0.206px">Yuliya Kovtanyuk</div></div>
<div class="row alt" style="top:389.15px"><div class="cb"></div><div class="c" style="left:61px;letter-spacing:0.23px">00000014</div><div class="c" style="left:173.5px;letter-spacing:0.17px">One-Time Consulting Se<span class="el">…</span></div><div class="c" style="left:361px;letter-spacing:0.292px">Expert Advisory <span class="el">…</span></div><div class="c" style="left:502px;letter-spacing:0.192px">Purchase Agree<span class="el">…</span></div><div class="bdg">Active</div><div class="c" style="left:811px;letter-spacing:0.747px">07/11/2026</div><div class="c" style="left:952px;letter-spacing:0.441px">No</div><div class="c" style="left:1074px;letter-spacing:0.17px">1,000,000.00</div><div class="c" style="left:1186px;letter-spacing:0;transform-origin:0 50%;transform:scaleX(0.889)">EUR</div><div class="c" style="left:1308px;letter-spacing:0.538px">Mark Hoffmann</div></div>
<div class="row last" style="top:435.98px"><div class="cb"></div><div class="c" style="left:61px;letter-spacing:0.23px">00000009</div><div class="c" style="left:173.5px;letter-spacing:0.21px">Standalone - Recruitme<span class="el">…</span></div><div class="c" style="left:361px;letter-spacing:0.367px">FinInfo Consulti<span class="el">…</span></div><div class="c" style="left:502px;letter-spacing:0.192px">Purchase Agree<span class="el">…</span></div><div class="bdg">Active</div><div class="c" style="left:811px;letter-spacing:0.747px">04/22/2026</div><div class="c" style="left:952px;letter-spacing:0.441px">Yes</div><div class="c" style="left:1074px;letter-spacing:0.17px">20,000.00</div><div class="c" style="left:1186px;letter-spacing:0;transform-origin:0 50%;transform:scaleX(0.889)">EUR</div><div class="c" style="left:1308px;letter-spacing:0.238px">John Weber</div></div>
<div class="abs" style="left:1525px;top:107px;width:19px;height:48px;border-left:1px solid #e4e4e4;border-bottom:1px solid #e2e2e2;background:#fff"></div><div class="abs" style="left:1525px;top:155px;width:19px;height:446px;background:#fafafa"><svg class="abs" style="left:5px;top:7.800px" width="9" height="7" viewBox="0 0 9 7"><path d="M0.800 6L4.500 1.200l3.700 4.800z" fill="#8a8a8a" stroke="#8a8a8a" stroke-width="1.500" stroke-linejoin="round"/></svg></div>
</div>
</div>
</body>
</html>
